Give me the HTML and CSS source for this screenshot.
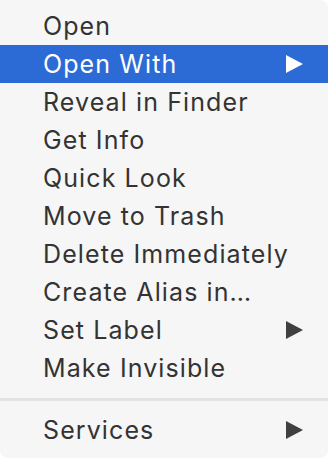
FILE: index.html
```html
<!DOCTYPE html>
<html>
<head>
<meta charset="utf-8">
<link rel="stylesheet" href="styles.css">
</head>
<body>
<div class="menu">
  <div class="item">Open</div>
  <div class="item active">Open With<span class="arrow"></span></div>
  <div class="item">Reveal in Finder</div>
  <div class="item">Get Info</div>
  <div class="item">Quick Look</div>
  <div class="item">Move to Trash</div>
  <div class="item">Delete Immediately</div>
  <div class="item">Create Alias in…</div>
  <div class="item">Set Label<span class="arrow"></span></div>
  <div class="item">Make Invisible</div>
  <div class="sep"></div>
  <div class="item">Services<span class="arrow"></span></div>
</div>
</body>
</html>
```
FILE: styles.css
```css
html, body {
  margin: 0;
  padding: 0;
  background: #ffffff;
}
.menu {
  width: 328px;
  height: 458px;
  box-sizing: border-box;
  background: #f6f6f6;
  border-radius: 0 8px 8px 8px;
  padding-top: 7px;
  font-family: Inter, "Liberation Sans", sans-serif;
  font-size: 25px;
  color: #333333;
}
.item {
  height: 38px;
  line-height: 38px;
  padding-left: 43px;
  padding-right: 25px;
  display: flex;
  align-items: center;
  justify-content: space-between;
  letter-spacing: 1.1px;
}
.item.active {
  background: #2c6bd6;
  color: #ffffff;
}
.arrow {
  width: 0;
  height: 0;
  border-top: 9px solid transparent;
  border-bottom: 9px solid transparent;
  border-left: 17px solid #404040;
}
.item.active .arrow {
  border-left-color: #ffffff;
}
.sep {
  height: 3px;
  background: #e3e3e3;
  margin: 11px 0 10px;
}
```
